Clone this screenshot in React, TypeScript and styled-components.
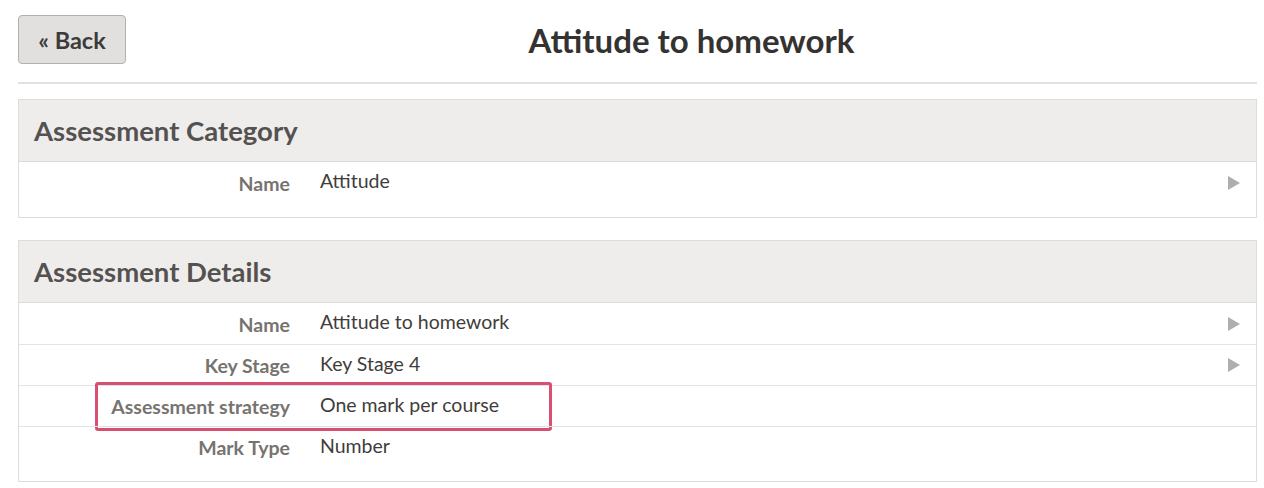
import React from "react";
import styled, { createGlobalStyle } from "styled-components";

const Global = createGlobalStyle`
  html, body { margin: 0; padding: 0; background: #fff; }
  body { font-family: "Lato", "Open Sans", sans-serif; }
`;

const Page = styled.div`
  padding: 15px 7px 0 18px;
`;

const TopBar = styled.div`
  display: flex;
  align-items: center;
  height: 49px;
`;

const BackButton = styled.button`
  width: 108px;
  height: 49px;
  box-sizing: border-box;
  background: #e1e0df;
  border: 1px solid #b3b1ae;
  border-radius: 4px;
  font-family: inherit;
  font-weight: 700;
  font-size: 23.5px;
  color: #3d3b39;
  padding: 0;
  cursor: pointer;
`;

const Title = styled.h1`
  flex: 1;
  margin: 0;
  text-align: center;
  font-size: 33px;
  font-weight: 700;
  color: #353331;
`;

const Divider = styled.hr`
  border: 0;
  height: 2px;
  background: #e2e2e2;
  margin: 18px 0 15px;
`;

const Panel = styled.section`
  border: 1px solid #dedddc;
  padding-bottom: 14px;
  margin-bottom: 22px;
`;

const PanelHeader = styled.h2`
  margin: 0;
  height: 62px;
  box-sizing: border-box;
  display: flex;
  align-items: center;
  padding: 0 15px;
  background: #eeedeb;
  border-bottom: 1px solid #dcdbd9;
  font-size: 27.5px;
  font-weight: 700;
  color: #545250;
`;

const Row = styled.div<{ $first?: boolean }>`
  position: relative;
  display: grid;
  grid-template-columns: 271px 1fr 40px;
  column-gap: 30px;
  align-items: center;
  height: 41px;
  box-sizing: border-box;
  border-top: ${(p) => (p.$first ? "0" : "1px solid #e3e3e3")};
`;

const Label = styled.div`
  text-align: right;
  font-size: 19.5px;
  font-weight: 700;
  color: #77736f;
  padding-top: 1px;
`;

const Value = styled.div`
  font-size: 19.5px;
  color: #3f3d3b;
  padding-bottom: 4px;
`;

const Arrow = styled.svg`
  justify-self: end;
  margin-right: 16px;
`;

const Highlight = styled.div`
  position: absolute;
  left: 76px;
  top: -4px;
  width: 457px;
  height: 49px;
  box-sizing: border-box;
  border: 3px solid #d94f71;
  border-radius: 3px;
  pointer-events: none;
`;

type Item = { label: string; value: string; link?: boolean; highlight?: boolean };

const Caret = () => (
  <Arrow width="12" height="14" viewBox="0 0 12 14">
    <path d="M0 0 L12 7 L0 14 Z" fill="#b0adaa" />
  </Arrow>
);

const DataPanel = ({ title, items }: { title: string; items: Item[] }) => (
  <Panel>
    <PanelHeader>{title}</PanelHeader>
    {items.map((it, i) => (
      <Row key={it.label} $first={i === 0}>
        <Label>{it.label}</Label>
        <Value>{it.value}</Value>
        {it.link ? <Caret /> : <span />}
        {it.highlight && <Highlight />}
      </Row>
    ))}
  </Panel>
);

export default function App() {
  return (
    <Page>
      <Global />
      <TopBar>
        <BackButton>« Back</BackButton>
        <Title>Attitude to homework</Title>
      </TopBar>
      <Divider />
      <DataPanel
        title="Assessment Category"
        items={[{ label: "Name", value: "Attitude", link: true }]}
      />
      <DataPanel
        title="Assessment Details"
        items={[
          { label: "Name", value: "Attitude to homework", link: true },
          { label: "Key Stage", value: "Key Stage 4", link: true },
          { label: "Assessment strategy", value: "One mark per course", highlight: true },
          { label: "Mark Type", value: "Number" },
        ]}
      />
    </Page>
  );
}
